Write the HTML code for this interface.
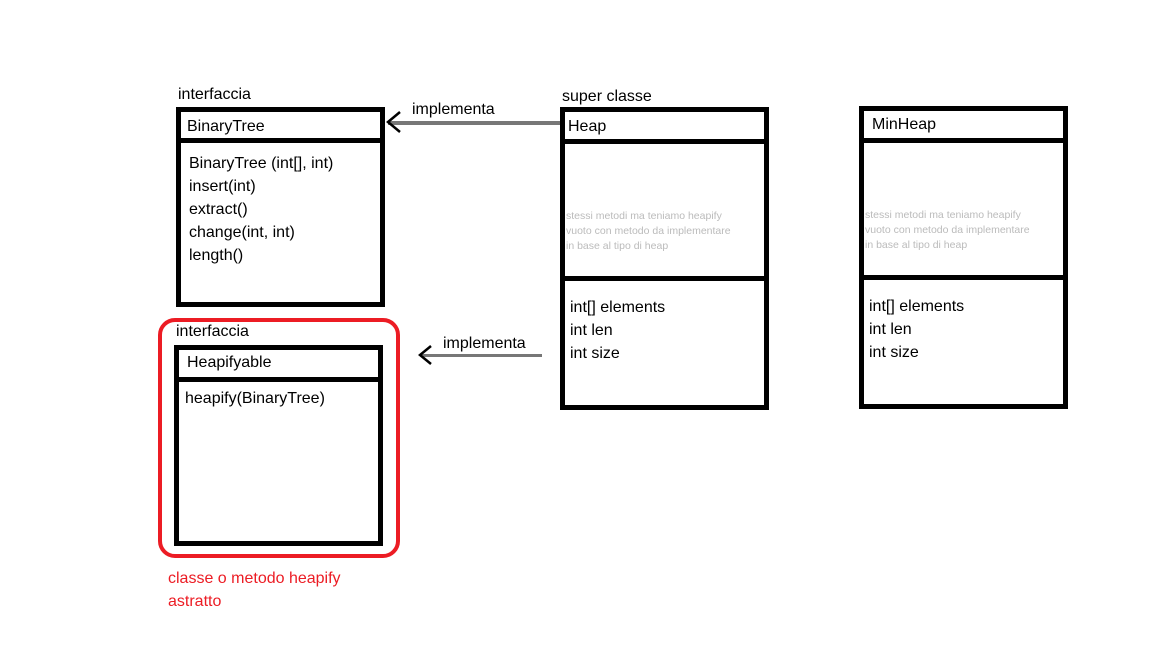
<!DOCTYPE html>
<html><head><style>
body{margin:0;width:1152px;height:648px;background:#fff;position:relative;overflow:hidden;font-family:"Liberation Sans",sans-serif;font-size:16px;color:#000}
.a{position:absolute;white-space:nowrap}
.b{position:absolute;border:5px solid #000;box-sizing:border-box}
.h{position:absolute;background:#000;height:5px}
.g{font-size:10.5px;color:#bbb;line-height:15px}
.l{line-height:23px}
</style></head><body>
<div class="a" style="left:178px;top:86px">interfaccia</div>
<div class="b" style="left:176px;top:107px;width:209px;height:200px"></div>
<div class="h" style="left:176px;top:138px;width:209px"></div>
<div class="a" style="left:187px;top:118px">BinaryTree</div>
<div class="a l" style="left:189px;top:152px">BinaryTree (int[], int)<br>insert(int)<br>extract()<br>change(int, int)<br>length()</div>

<div class="a" style="left:412px;top:101px">implementa</div>
<div style="position:absolute;left:388px;top:121px;width:172px;height:4px;background:#777"></div>
<svg class="a" style="left:384px;top:110px" width="20" height="26"><path d="M16 2 L4 12 L16 22" fill="none" stroke="#000" stroke-width="2.5"/></svg>

<div class="a" style="left:562px;top:88px">super classe</div>
<div class="b" style="left:560px;top:107px;width:209px;height:303px"></div>
<div class="h" style="left:560px;top:139px;width:209px"></div>
<div class="h" style="left:560px;top:276px;width:209px"></div>
<div class="a" style="left:568px;top:118px">Heap</div>
<div class="a g" style="left:566px;top:209px">stessi metodi ma teniamo heapify<br>vuoto con metodo da implementare<br>in base al tipo di heap</div>
<div class="a l" style="left:570px;top:296px">int[] elements<br>int len<br>int size</div>

<div class="b" style="left:859px;top:106px;width:209px;height:303px"></div>
<div class="h" style="left:859px;top:138px;width:209px"></div>
<div class="h" style="left:859px;top:275px;width:209px"></div>
<div class="a" style="left:872px;top:116px">MinHeap</div>
<div class="a g" style="left:865px;top:208px">stessi metodi ma teniamo heapify<br>vuoto con metodo da implementare<br>in base al tipo di heap</div>
<div class="a l" style="left:869px;top:295px">int[] elements<br>int len<br>int size</div>

<div style="position:absolute;left:158px;top:318px;width:242px;height:240px;border:4px solid #ec1c24;border-radius:17px;box-sizing:border-box"></div>
<div class="a" style="left:176px;top:323px">interfaccia</div>
<div class="b" style="left:174px;top:345px;width:209px;height:201px"></div>
<div class="h" style="left:174px;top:377px;width:209px"></div>
<div class="a" style="left:187px;top:354px">Heapifyable</div>
<div class="a" style="left:185px;top:390px">heapify(BinaryTree)</div>

<div class="a" style="left:443px;top:335px">implementa</div>
<div style="position:absolute;left:422px;top:354px;width:120px;height:3px;background:#777"></div>
<svg class="a" style="left:416px;top:344px" width="20" height="24"><path d="M15 2 L4 11 L15 20" fill="none" stroke="#000" stroke-width="2.5"/></svg>

<div class="a" style="left:168px;top:567px;color:#ec1c24;line-height:23px">classe o metodo heapify<br>astratto</div>
</body></html>
